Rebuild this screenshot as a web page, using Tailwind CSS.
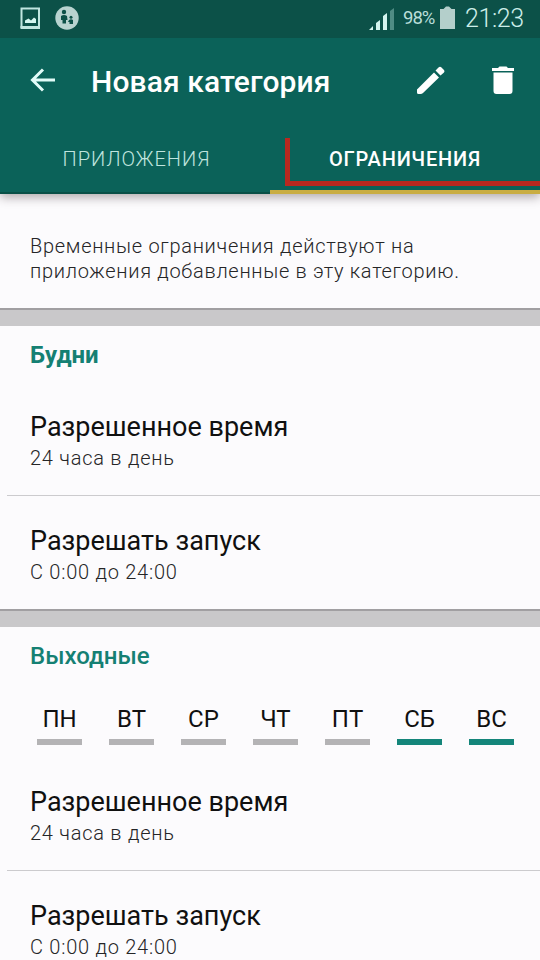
<!DOCTYPE html>
<html lang="ru">
<head>
<meta charset="utf-8">
<title>Новая категория</title>
<script src="https://cdn.jsdelivr.net/npm/@tailwindcss/browser@4"></script>
</head>
<body class="w-[540px] h-[960px] overflow-hidden bg-[#fcfbfd] font-['Roboto','Noto_Sans',sans-serif] text-[#101010]">
<div class="flex h-[960px] flex-col overflow-hidden">
  <header class="relative z-10 h-[194px] shrink-0 bg-[#0b6259] shadow-[0_3px_10px_rgba(50,35,40,0.4)]">
    <div class="flex h-[38px] items-center bg-[#0c5148] text-[#b9ded8]">
      <svg class="ml-5 -mt-[3px] h-[22px] w-[21px] shrink-0" viewBox="0 0 21 22"><path d="M1.5 1.5H19V20H1.5Z" fill="none" stroke="#c0e6e0" stroke-width="2"/><path d="M.5 19H20V22H.5Z" fill="#c0e6e0"/><path d="M5 16V13.5L8.500 11.500L11 13.500L14 10.500L16 12V16Z" fill="#d4f5ef"/></svg>
      <svg class="ml-[14px] -mt-[3px] h-6 w-6 shrink-0" viewBox="0 0 24 24"><circle cx="12" cy="12" r="11.7" fill="#b8d3d0"/><g fill="#0c5148"><circle cx="9" cy="6" r="2.2"/><path d="M6 10Q9 8 12 10L12.5 14H11V17.500H7.500V14H6Z"/><circle cx="16" cy="11.3" r="1.5"/><path d="M14 14Q16 12.5 18 14V18H14.5V16H13Z"/></g></svg>
      <svg class="ml-auto -mt-px h-6 w-[25px] shrink-0" viewBox="0 0 25 24"><path d="M0 23L4 19V23Z M7 16L11 13V23H7Z M14 9L18 6V23H14Z" fill="#d4f4ee"/><path d="M21 4L25 1V23H21Z" fill="#4f8c84"/></svg>
      <span class="ml-[9px] -mt-px w-8 text-[18.5px] tracking-[-1px]">98%</span>
      <svg class="ml-[5px] -mt-[3px] h-[23px] w-[15px] shrink-0" viewBox="0 0 15 23"><path d="M0 3H3.500L6 .5H9L11.500 3H15V23H0Z" fill="#b4cfcb"/></svg>
      <span class="ml-[10px] w-[75px] text-[25px] font-light tracking-[-0.4px] text-[#cdeee9]">21:23</span>
    </div>
    <div class="flex h-[84px] items-center text-white">
      <svg class="ml-[29px] h-6 w-[26px] shrink-0" viewBox="0 0 26 24" fill="none" stroke="#e2fbf8" stroke-width="3"><path d="M14 1.500L3.500 12L14 22.500M3.500 12H26"/></svg>
      <h1 class="ml-[36px] mt-1 whitespace-nowrap text-[30px] font-medium leading-none tracking-[0.1px]">Новая категория</h1>
      <svg class="ml-auto h-7 w-7 shrink-0" viewBox="0 0 28 28" fill="white"><path d="M0 23.500L17 6.500L22 11.500L6 27Q5 28 3.500 28H1.500Q0 28 0 26.500Z M18.500 4.500L21.500 1.500Q23 0 24.500 1.500L27 4Q28 5 27 6.500L23.500 9.500Z"/></svg>
      <svg class="ml-[47px] mr-[26px] h-7 w-[22px] shrink-0" viewBox="0 0 22 28" fill="white"><path d="M0 2H6L7.500 .5H14.500L16 2H22V5H0Z M1.500 6.500H20.500V25Q20.500 28 17.500 28H4.500Q1.500 28 1.500 25Z"/></svg>
    </div>
    <nav class="flex h-[72px]">
      <div class="flex w-[270px] justify-center border-b-2 border-[#095047] pt-[26px] pl-[3px] text-[20px] font-light leading-[22px] tracking-[1px] text-[#c0e5df]">ПРИЛОЖЕНИЯ</div>
      <div class="relative flex w-[270px] justify-center border-b-4 border-[#c9ad43] pt-[26px] text-[20px] font-medium leading-[22px] tracking-[0.8px] text-white">ОГРАНИЧЕНИЯ
        <div class="absolute left-[15px] top-[16px] h-[48px] w-[255px] border-b-[5px] border-l-[5px] border-[#b92820]"></div>
      </div>
    </nav>
  </header>
  <main>
    <p class="h-[114px] whitespace-nowrap pl-[30px] pt-[40px] text-[20px] font-light leading-[25px] tracking-[0.7px] text-[#252527]">Временные ограничения действуют на<br>приложения добавленные в эту категорию.</p>
    <div class="h-[18px] border-t-2 border-[#a19fa2] bg-[#c9c8ca]"></div>
    <section>
      <h2 class="h-[56px] pl-[30px] pt-[15px] text-[24px] font-bold leading-[28px] text-[#158073]">Будни</h2>
      <div class="ml-[7px] h-[114px] border-b border-[#cccbce] pl-[23px] pt-[30px]">
        <div class="text-[27px] leading-[30px]">Разрешенное время</div>
        <div class="mt-[5px] text-[20px] font-light leading-[22px] tracking-[0.75px] text-[#252527]">24 часа в день</div>
      </div>
      <div class="h-[113px] pl-[30px] pt-[30px]">
        <div class="text-[27px] leading-[30px]">Разрешать запуск</div>
        <div class="mt-[5px] text-[20px] font-light leading-[22px] tracking-[0.75px] text-[#252527]">С 0:00 до 24:00</div>
      </div>
    </section>
    <div class="h-[18px] border-t-2 border-[#a19fa2] bg-[#c9c8ca]"></div>
    <section>
      <h2 class="h-[78px] pl-[30px] pt-[15px] text-[24px] font-medium leading-[28px] text-[#158073]">Выходные</h2>
      <div class="flex h-[52px] gap-[27px] pl-[37px] text-center text-[24px] leading-[28px]">
        <div class="h-[40px] w-[45px] border-b-[6px] border-[#b4b3b5]">ПН</div>
        <div class="h-[40px] w-[45px] border-b-[6px] border-[#b4b3b5]">ВТ</div>
        <div class="h-[40px] w-[45px] border-b-[6px] border-[#b4b3b5]">СР</div>
        <div class="h-[40px] w-[45px] border-b-[6px] border-[#b4b3b5]">ЧТ</div>
        <div class="h-[40px] w-[45px] border-b-[6px] border-[#b4b3b5]">ПТ</div>
        <div class="h-[40px] w-[45px] border-b-[6px] border-[#14857a]">СБ</div>
        <div class="h-[40px] w-[45px] border-b-[6px] border-[#14857a]">ВС</div>
      </div>
      <div class="ml-[7px] h-[114px] border-b border-[#cccbce] pl-[23px] pt-[30px]">
        <div class="text-[27px] leading-[30px]">Разрешенное время</div>
        <div class="mt-[5px] text-[20px] font-light leading-[22px] tracking-[0.75px] text-[#252527]">24 часа в день</div>
      </div>
      <div class="h-[113px] pl-[30px] pt-[30px]">
        <div class="text-[27px] leading-[30px]">Разрешать запуск</div>
        <div class="mt-[5px] text-[20px] font-light leading-[22px] tracking-[0.75px] text-[#252527]">С 0:00 до 24:00</div>
      </div>
    </section>
  </main>
</div>
</body>
</html>
